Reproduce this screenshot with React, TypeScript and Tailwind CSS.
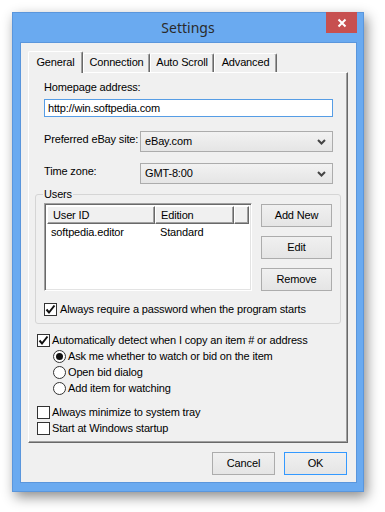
import React from 'react';

function Check({ checked }: { checked?: boolean }) {
  return (
    <span className="w-[13px] h-[13px] border border-[#333] bg-white flex items-center justify-center shrink-0">
      {checked && (
        <svg width="11" height="11" viewBox="0 0 11 11">
          <path d="M1.5 5.5 L4 8.5 L9.5 1.5" stroke="#111" strokeWidth="2" fill="none" />
        </svg>
      )}
    </span>
  );
}

function Radio({ checked }: { checked?: boolean }) {
  return (
    <span className="w-[13px] h-[13px] rounded-full border border-[#333] bg-white flex items-center justify-center shrink-0">
      {checked && <span className="w-[7px] h-[7px] rounded-full bg-[#111]" />}
    </span>
  );
}

function Combo({ value }: { value: string }) {
  return (
    <div className="w-[193px] h-[21px] border border-[#acacac] bg-gradient-to-b from-[#f2f2f2] to-[#e5e5e5] flex items-center pl-[4px] pr-[6px]">
      <span className="flex-1">{value}</span>
      <svg width="9" height="6" viewBox="0 0 9 6">
        <path d="M1 1 L4.5 4.5 L8 1" stroke="#444" strokeWidth="2" fill="none" />
      </svg>
    </div>
  );
}

function Btn({ label, w, isDefault }: { label: string; w: string; isDefault?: boolean }) {
  return (
    <button
      className={`${w} border ${isDefault ? 'border-[#3399ff]' : 'border-[#acacac]'} bg-gradient-to-b from-[#f0f0f0] to-[#e5e5e5] flex items-center justify-center`}
    >
      {label}
    </button>
  );
}

function Tab({ label, w, selected }: { label: string; w: string; selected?: boolean }) {
  if (selected) {
    return (
      <div className={`${w} h-[22px] -mb-px relative z-10 bg-[#f0f0f0] border-t border-l border-r border-t-white border-l-white border-r-[#696969] shadow-[inset_-1px_0_0_#a0a0a0] rounded-t-[2px] flex justify-center pt-[4px]`}>
        {label}
      </div>
    );
  }
  return (
    <div className={`${w} h-[19px] bg-[#f0f0f0] border-t border-l border-r border-t-white border-l-white border-r-[#696969] shadow-[inset_-1px_0_0_#a0a0a0] rounded-t-[2px] flex justify-center pt-[2px]`}>
      {label}
    </div>
  );
}

export default function App() {
  return (
    <div className="w-[385px] h-[512px] bg-white pt-[12px] pl-[12px] font-['Liberation_Sans',Arial,sans-serif] text-[11px] tracking-[-0.15px] text-black leading-[13px] whitespace-nowrap">
      <div className="w-[352px] h-[480px] bg-[#6aaaf0] border border-[#5a96dc] shadow-[3px_5px_12px_rgba(0,0,0,0.45)] flex flex-col">
        {/* Title bar */}
        <div className="h-[29px] relative flex items-center justify-center">
          <span className="font-['Noto_Sans',sans-serif] text-[14px] tracking-normal text-[#2a2a2a] leading-none">Settings</span>
          <div className="absolute right-[6px] -top-px w-[31px] h-[21px] bg-[#c75050] flex items-center justify-center">
            <svg width="10" height="10" viewBox="0 0 10 10">
              <path d="M1.5 1.5 L8.5 8.5 M8.5 1.5 L1.5 8.5" stroke="#fff" strokeWidth="2" />
            </svg>
          </div>
        </div>

        {/* Client */}
        <div className="ml-[7px] w-[337px] h-[441px] bg-[#f0f0f0] border border-[#5a96dc] pl-[7px] pt-[8px]">
          <div className="flex items-end h-[21px]">
            <Tab label="General" w="w-[55px]" selected />
            <Tab label="Connection" w="w-[67px]" />
            <Tab label="Auto Scroll" w="w-[64px]" />
            <Tab label="Advanced" w="w-[63px]" />
          </div>

          <div className="w-[320px] h-[371px] border border-t-white border-l-white border-r-[#696969] border-b-[#696969] shadow-[inset_-1px_-1px_0_#a0a0a0] flex flex-col">
            <div className="ml-[15px] mt-[8px] h-[13px]">Homepage address:</div>
            <div className="ml-[15px] mt-[5px] w-[289px] h-[18px] border border-[#569de5] bg-white pl-[3px] flex items-center">
              http://win.softpedia.com
            </div>

            <div className="ml-[15px] mt-[14px] flex">
              <div className="w-[96px] pt-[2px]">Preferred eBay site:</div>
              <Combo value="eBay.com" />
            </div>
            <div className="ml-[15px] mt-[11px] flex">
              <div className="w-[96px] pt-[2px]">Time zone:</div>
              <Combo value="GMT-8:00" />
            </div>

            {/* Users group */}
            <div className="ml-[6px] mt-[10px] w-[306px] h-[130px] border border-[#d5d5d5] rounded-[3px] relative">
              <span className="absolute left-[7px] -top-[7px] px-[1px] bg-[#f0f0f0]">Users</span>
              <div className="flex mt-[8px] ml-[8px]">
                <div className="w-[208px] h-[88px] border border-t-[#a0a0a0] border-l-[#a0a0a0] border-r-white border-b-white shadow-[inset_1px_1px_0_#696969,inset_-1px_-1px_0_#e3e3e3] bg-white p-[2px] flex flex-col">
                  <div className="flex h-[18px]">
                    <div className="w-[108px] border-t border-l border-r border-b border-t-white border-l-white border-r-[#696969] border-b-[#696969] shadow-[inset_-1px_-1px_0_#a0a0a0] bg-[#f0f0f0] pl-[5px] flex items-center">User ID</div>
                    <div className="w-[79px] border-t border-l border-r border-b border-t-white border-l-white border-r-[#696969] border-b-[#696969] shadow-[inset_-1px_-1px_0_#a0a0a0] bg-[#f0f0f0] pl-[5px] flex items-center">Edition</div>
                    <div className="flex-1 border-t border-l border-r border-b border-t-white border-l-white border-r-[#696969] border-b-[#696969] shadow-[inset_-1px_-1px_0_#a0a0a0] bg-[#f0f0f0]" />
                  </div>
                  <div className="flex h-[17px] items-center">
                    <div className="w-[108px] pl-[4px]">softpedia.editor</div>
                    <div className="pl-[5px]">Standard</div>
                  </div>
                </div>
                <div className="ml-[9px] mt-[1px] flex flex-col gap-[9px]">
                  <Btn label="Add New" w="w-[71px] h-[23px]" />
                  <Btn label="Edit" w="w-[71px] h-[23px]" />
                  <Btn label="Remove" w="w-[71px] h-[23px]" />
                </div>
              </div>
              <div className="ml-[8px] mt-[10px] flex items-center gap-[3px] h-[16px]">
                <Check checked />
                <span>Always require a password when the program starts</span>
              </div>
            </div>

            <div className="ml-[8px] mt-[8px] flex flex-col">
              <div className="flex items-center gap-[2px] h-[16px]">
                <Check checked />
                <span>Automatically detect when I copy an item # or address</span>
              </div>
              <div className="pl-[16px] flex flex-col">
                <div className="flex items-center gap-[2px] h-[16px]">
                  <Radio checked />
                  <span>Ask me whether to watch or bid on the item</span>
                </div>
                <div className="flex items-center gap-[2px] h-[16px]">
                  <Radio />
                  <span>Open bid dialog</span>
                </div>
                <div className="flex items-center gap-[2px] h-[16px]">
                  <Radio />
                  <span>Add item for watching</span>
                </div>
              </div>
              <div className="mt-[8px] flex items-center gap-[2px] h-[16px]">
                <Check />
                <span>Always minimize to system tray</span>
              </div>
              <div className="flex items-center gap-[2px] h-[16px]">
                <Check />
                <span>Start at Windows startup</span>
              </div>
            </div>
          </div>

          <div className="mt-[9px] flex justify-end gap-[9px] pr-[9px] h-[23px]">
            <Btn label="Cancel" w="w-[63px]" />
            <Btn label="OK" w="w-[63px]" isDefault />
          </div>
        </div>
      </div>
    </div>
  );
}
